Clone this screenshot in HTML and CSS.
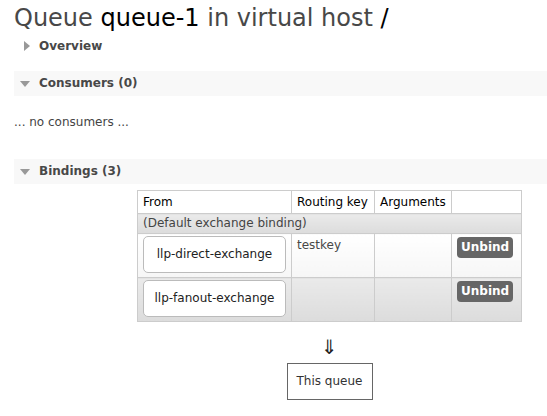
FILE: index.html
```html
<!DOCTYPE html>
<html>
<head>
<meta charset="utf-8">
<link rel="stylesheet" href="styles.css">
</head>
<body>
<div class="page">
  <h1 class="title">Queue <b class="name">queue-1</b> in virtual host <b class="name">/</b></h1>
  <div class="section collapsed">
    <h2 class="sec-head"><span class="tri tri-right"></span>Overview</h2>
  </div>
  <div class="section">
    <h2 class="sec-head bar"><span class="tri tri-down"></span>Consumers (0)</h2>
    <p class="empty">... no consumers ...</p>
  </div>
  <div class="section">
    <h2 class="sec-head bar"><span class="tri tri-down"></span>Bindings (3)</h2>
    <div class="bindings">
      <table class="list">
        <thead>
          <tr><th class="c-from">From</th><th class="c-key">Routing key</th><th class="c-args">Arguments</th><th class="c-act"></th></tr>
        </thead>
        <tbody>
          <tr class="alt"><td colspan="4" class="default">(Default exchange binding)</td></tr>
          <tr class="odd">
            <td><span class="ex">llp-direct-exchange</span></td>
            <td class="key">testkey</td>
            <td></td>
            <td class="act"><span class="btn">Unbind</span></td>
          </tr>
          <tr class="alt">
            <td><span class="ex">llp-fanout-exchange</span></td>
            <td class="key"></td>
            <td></td>
            <td class="act"><span class="btn">Unbind</span></td>
          </tr>
        </tbody>
      </table>
      <div class="arrow">⇓</div>
      <div class="this">This queue</div>
    </div>
  </div>
</div>
</body>
</html>
```

FILE: styles.css
```css
html, body {
  margin: 0;
  padding: 0;
  background: #fff;
}
body {
  font-family: "DejaVu Sans", Verdana, sans-serif;
  font-size: 12px;
  color: #444;
}
.page {
  padding: 0 0 0 14px;
}
.title {
  margin: 0;
  padding-top: 4px;
  font-size: 24px;
  font-weight: normal;
  line-height: 28px;
  color: #484848;
}
.title .name {
  font-weight: normal;
  color: #000;
}
.sec-head {
  margin: 0;
  position: relative;
  font-size: 12px;
  font-weight: bold;
  color: #484848;
  padding-left: 25px;
  height: 25px;
  line-height: 25px;
}
.collapsed .sec-head {
  padding-top: 3px;
  height: 22px;
  line-height: 22px;
}
.bar {
  background: #f8f8f8;
  margin-top: 14px;
}
.tri {
  position: absolute;
  width: 0;
  height: 0;
}
.tri-right {
  left: 10px;
  top: 9px;
  border-top: 5px solid transparent;
  border-bottom: 5px solid transparent;
  border-left: 6px solid #999;
}
.tri-down {
  left: 6px;
  top: 10px;
  border-left: 5px solid transparent;
  border-right: 5px solid transparent;
  border-top: 6px solid #999;
}
.empty {
  margin: 0;
  padding: 19px 0 0 0;
  height: 30px;
  font-size: 12px;
  color: #444;
}
.bindings {
  display: flex;
  flex-direction: column;
  align-items: center;
  width: 385px;
  margin-left: 123px;
  padding-top: 6px;
}
.list {
  border-collapse: collapse;
  border: 1px solid #ccc;
  width: 385px;
  font-size: 12px;
  color: #444;
}
.list th, .list td {
  border: 1px solid #ccc;
  text-align: left;
  vertical-align: top;
}
.list th {
  font-weight: normal;
  color: #000;
  background: #fff;
  height: 22px;
  padding: 0 5px;
  line-height: 22px;
}
.c-from { width: 142px; }
.c-key { width: 72px; }
.c-args { width: 66px; }
.list td {
  padding: 2px 5px;
}
.list td.default {
  padding: 0 5px;
  height: 19px;
  line-height: 19px;
  color: #444;
}
.list tr.alt td {
  background: linear-gradient(#eaeaea, #dcdcdc);
}
.list tr.odd td {
  background: linear-gradient(#fff, #f6f6f6);
}
.list td.key {
  padding-top: 4px;
  color: #484848;
}
.ex {
  display: block;
  box-sizing: border-box;
  width: 143px;
  height: 37px;
  border: 1px solid #bbb;
  border-radius: 5px;
  background: #fff;
  color: #222;
  line-height: 35px;
  text-align: center;
  margin-bottom: 2px;
}
.act {
  padding-left: 5px;
}
.btn {
  display: inline-block;
  background: #666;
  color: #fff;
  font-weight: bold;
  border-radius: 4px;
  padding: 0 4px;
  height: 21px;
  line-height: 21px;
  margin-top: 1px;
}
.arrow {
  margin-top: 14px;
  font-size: 20px;
  line-height: 22px;
  color: #222;
}
.this {
  margin-top: 5px;
  border: 1px solid #666;
  width: 84px;
  height: 35px;
  line-height: 35px;
  text-align: center;
  color: #333;
}
```
